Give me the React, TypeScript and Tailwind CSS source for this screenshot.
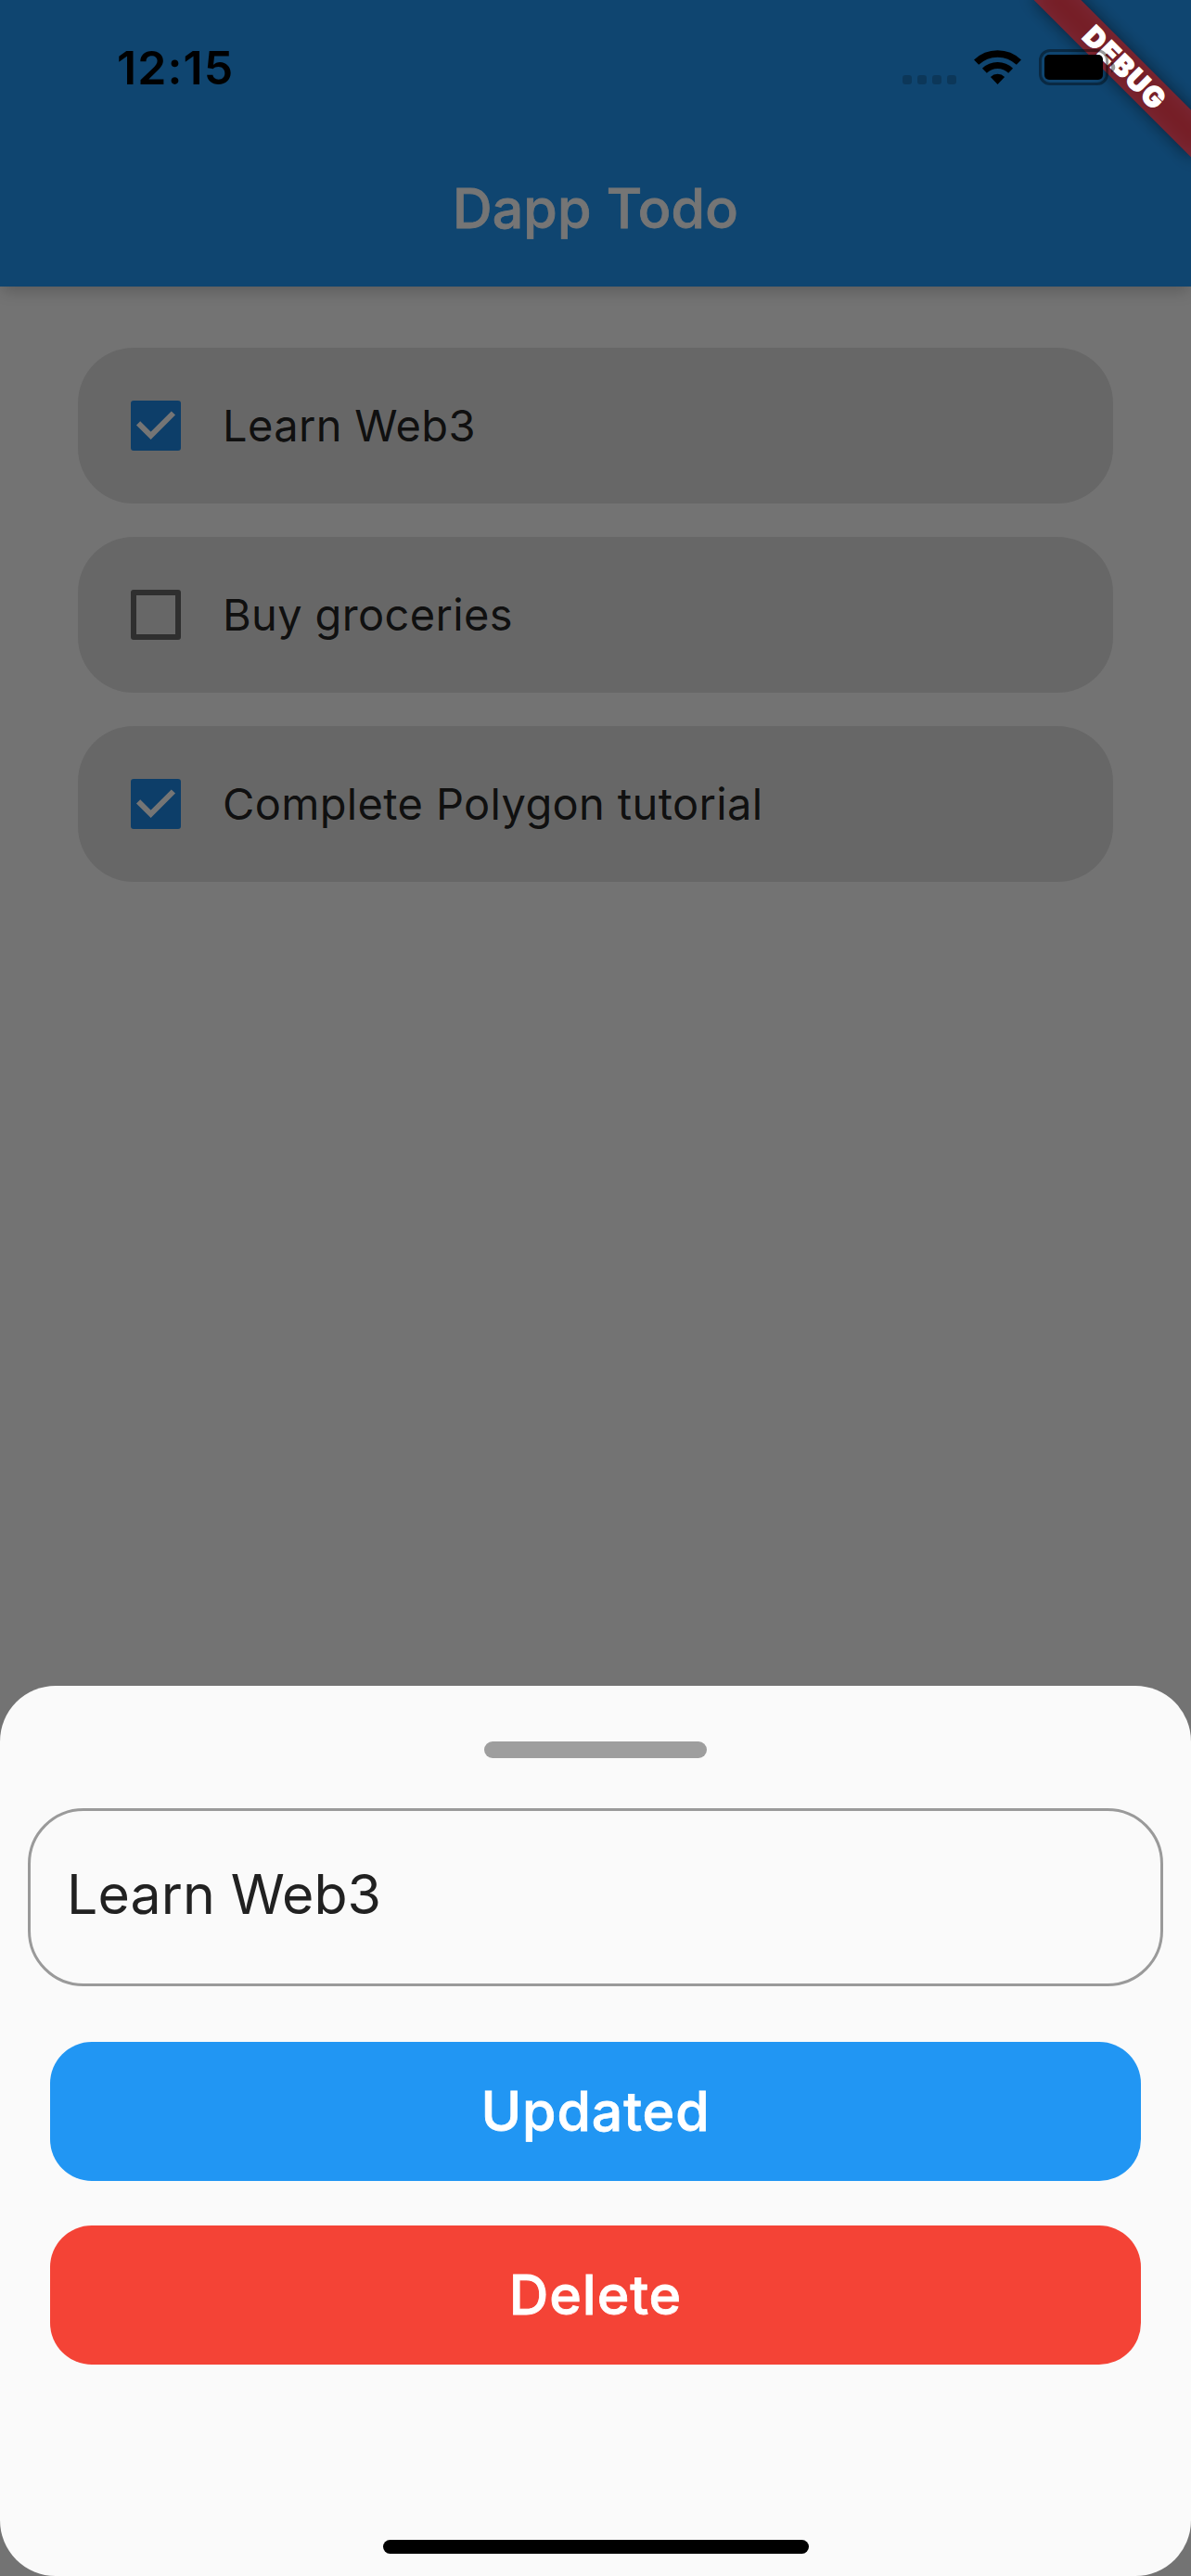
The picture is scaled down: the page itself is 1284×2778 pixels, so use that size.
type Todo = { title: string; done: boolean };

const todos: Todo[] = [
  { title: "Learn Web3", done: true },
  { title: "Buy groceries", done: false },
  { title: "Complete Polygon tutorial", done: true },
];

function Checkbox({ checked }: { checked: boolean }) {
  if (!checked) {
    return <span className="block size-[54px] shrink-0 rounded-[3px] border-[6px] border-black/54" />;
  }
  return (
    <span className="block size-[54px] shrink-0 rounded-[3px] bg-[#1e88e5]">
      <svg viewBox="0 0 54 54" className="size-full" fill="none" stroke="#fff" strokeWidth="6">
        <path d="M8.1 24.3 L21.6 37.8 L45.9 13.5" />
      </svg>
    </span>
  );
}

function TodoCard({ todo }: { todo: Todo }) {
  return (
    <li className="flex h-[168px] items-center rounded-[60px] bg-[#e0e0e0] pl-[57px]">
      <Checkbox checked={todo.done} />
      <span className="ml-[45px] pb-[1px] text-[47px] leading-none tracking-[0.35px] whitespace-nowrap text-black/87">
        {todo.title}
      </span>
    </li>
  );
}

function StatusBar() {
  return (
    <div className="absolute inset-x-0 top-0 h-[141px] text-black">
      <span className="absolute top-[48px] left-[126px] text-[50px] leading-none font-semibold tracking-[1.1px]">
        12:15
      </span>
      <div className="absolute top-[81px] left-[973px] flex gap-[6px]">
        {[0, 1, 2, 3].map((dot) => (
          <span key={dot} className="size-[10px] rounded-[3px] bg-black/20" />
        ))}
      </div>
      <svg viewBox="0 0 51 38" className="absolute top-[54px] left-[1050px] h-[38px] w-[51px]" fill="none" stroke="#000">
        <path d="M2.6 13.2a33 33 0 0 1 45.8 0" strokeWidth="7.4" />
        <path d="M11.4 22.3a20.3 20.3 0 0 1 28.2 0" strokeWidth="7" />
        <path d="M25.5 37l-7.6-8.1a11 11 0 0 1 15.2 0z" fill="#000" stroke="none" />
      </svg>
      <svg viewBox="0 0 84 40" className="absolute top-[53px] left-[1120px] h-[40px] w-[84px]">
        <rect x="1.5" y="1.5" width="72" height="36" rx="10.5" fill="none" stroke="#000" strokeOpacity=".4" strokeWidth="3" />
        <rect x="6" y="6" width="63" height="27" rx="5" fill="#000" />
        <path d="M78 13.5v12c2.6-1.1 4.3-3.4 4.3-6s-1.7-4.9-4.3-6z" fill="#000" fillOpacity=".4" />
      </svg>
    </div>
  );
}

function DebugBanner() {
  return (
    <div className="absolute top-0 right-0 size-[260px] overflow-hidden">
      <div className="absolute top-[54px] left-[68px] h-[36px] w-[240px] rotate-45">
        <div className="absolute inset-0 bg-black/50 blur-[9px]" />
        <div className="absolute inset-0 flex items-center justify-center bg-[#b71c1c]/63 pb-[1px] pl-[3px] text-[30px] leading-none font-black tracking-[1.6px] text-white [-webkit-text-stroke:1.2px_#fff]">
          DEBUG
        </div>
      </div>
    </div>
  );
}

function EditSheet() {
  return (
    <section className="absolute inset-x-0 bottom-0 flex h-[960px] flex-col items-center rounded-[60px] bg-[#fafafa] pt-[60px]">
      <div className="h-[18px] w-[240px] rounded-full bg-[#9e9e9e]" />
      <div className="mt-[54px] flex h-[192px] w-[1224px] items-center rounded-[60px] border-[3px] border-[#9a9a9a] pb-[7px] pl-[39px] text-[59px] leading-none tracking-[0.1px] text-[#212121]">
        Learn Web3
      </div>
      <button className="mt-[60px] h-[150px] w-[1176px] rounded-[45px] bg-[#2196f3] pb-[1px] text-[59px] leading-none font-medium tracking-[0.9px] text-white [-webkit-text-stroke:0.8px_#fff]">
        Updated
      </button>
      <button className="mt-[48px] h-[150px] w-[1176px] rounded-[45px] bg-[#f44336] pb-[1px] text-[59px] leading-none font-medium tracking-[0.9px] text-white [-webkit-text-stroke:0.8px_#fff]">
        Delete
      </button>
      <div className="mt-[189px] h-[15px] w-[459px] rounded-full bg-black" />
    </section>
  );
}

export default function App() {
  return (
    <div className="relative h-[2778px] w-[1284px] overflow-hidden bg-[#fafafa] font-['Inter',sans-serif]">
      <header className="relative flex h-[309px] items-center justify-center bg-[#2196f3] pt-[139px] shadow-[0_6px_16px_-2px_rgba(0,0,0,0.22)]">
        <h1 className="text-[59px] leading-none font-medium tracking-[0.2px] text-white [-webkit-text-stroke:0.8px_#fff]">
          Dapp Todo
        </h1>
      </header>
      <ul className="flex flex-col gap-[36px] px-[84px] pt-[66px]">
        {todos.map((todo) => (
          <TodoCard key={todo.title} todo={todo} />
        ))}
      </ul>
      <div className="absolute inset-0 bg-black/54" />
      <EditSheet />
      <DebugBanner />
      <StatusBar />
    </div>
  );
}
